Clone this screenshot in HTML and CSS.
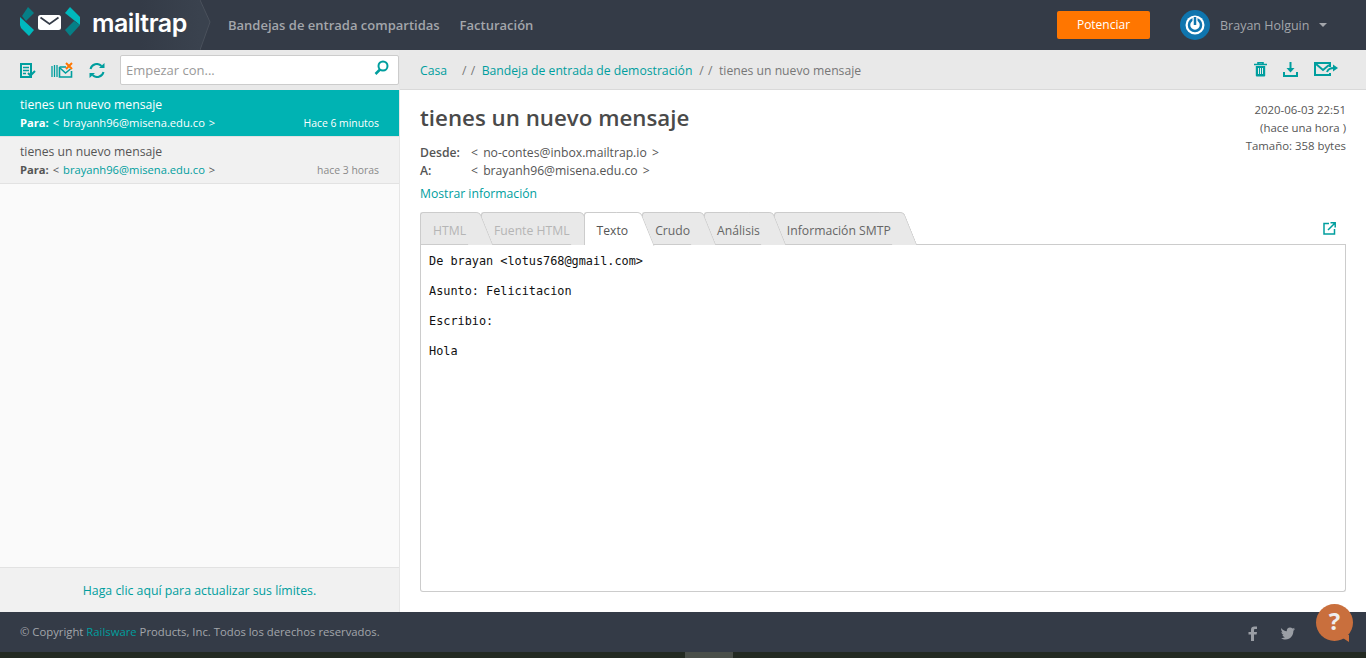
FILE: index.html
```html
<!DOCTYPE html>
<html lang="es">
<head>
    <meta charset="UTF-8">
    <title>Mailtrap</title>
    <link rel="stylesheet" href="styles.css">
</head>
<body>
<div class="page">
    <header class="topbar">
        <div class="brand">
            <svg class="brand-mark" width="60" height="30" viewBox="0 0 60 30">
                <path d="M8 0 14 6 6 14 2 9z" fill="#067f86"/>
                <path d="M0 10 14 23 9 29 1 21 0 18z" fill="#00b9bd"/>
                <rect x="18" y="8" width="23" height="15" rx="2.500" fill="#fff"/>
                <path d="M20.500 10.500 29.500 17 38.500 10.500" fill="none" stroke="#343b47" stroke-width="1.800"/>
                <path d="M45 6 50 0 59 9 60 10 60 18z" fill="#00b9bd"/>
                <path d="M45 23 54 14 60 18 50 29z" fill="#067f86"/>
            </svg>
            <span class="brand-name">mailtrap</span>
            <svg class="brand-chevron" width="12" height="50" viewBox="0 0 12 50">
                <path d="M0 0 10 22 0 50" fill="#3a424e" stroke="#4a515c"/>
            </svg>
        </div>
        <nav class="topnav">
            <a href="#">Bandejas de entrada compartidas</a>
            <a href="#">Facturación</a>
        </nav>
        <a class="btn-upgrade" href="#">Potenciar</a>
        <div class="user">
            <svg width="30" height="30" viewBox="0 0 30 30">
                <circle cx="15" cy="15" r="15" fill="#0f75ae"/>
                <circle cx="15" cy="15" r="9.500" fill="#fff"/>
                <circle cx="15" cy="15" r="6" fill="none" stroke="#0f75ae" stroke-width="2.500"/>
                <path d="M15 7v8" stroke="#fff" stroke-width="5"/>
                <path d="M15 7v8" stroke="#0f75ae" stroke-width="2.500"/>
            </svg>
            <span class="user-name">Brayan Holguin</span>
            <span class="caret"></span>
        </div>
    </header>

    <div class="main">
        <aside class="sidebar">
            <div class="side-tools">
                <svg class="icon" width="16" height="15" viewBox="0 0 16 15">
                    <path d="M1 1h10v13H1z" fill="none" stroke="#009e9e" stroke-width="2"/>
                    <path d="M3 4.500h6M3 7.500h6M3 10.500h3" stroke="#009e9e" stroke-width="1.500"/>
                    <path d="M8 10l2.500 2.500 4.500-4.500" fill="none" stroke="#009e9e" stroke-width="2"/>
                </svg>
                <svg class="icon" width="22" height="16" viewBox="0 0 22 16">
                    <path d="M1 4v11M3.500 3v12M6 3v12" stroke="#009e9e" stroke-width="1.300"/>
                    <path d="M8.500 5h6.500M20.500 9v6h-12V5" fill="none" stroke="#009e9e" stroke-width="1.600"/>
                    <path d="M9 6l5.500 5 5-4" fill="none" stroke="#009e9e" stroke-width="1.600"/>
                    <path d="M15 1l6 6M21 1l-6 6" stroke="#ff7600" stroke-width="2"/>
                </svg>
                <svg class="icon" width="16" height="15" viewBox="0 0 16 15">
                    <path d="M1.500 6a6.500 6.500 0 0 1 11-3" fill="none" stroke="#009e9e" stroke-width="2"/>
                    <path d="M10 5h5.500V0z" fill="#009e9e"/>
                    <path d="M14.500 9a6.500 6.500 0 0 1-11 3" fill="none" stroke="#009e9e" stroke-width="2"/>
                    <path d="M6 10H.5v5z" fill="#009e9e"/>
                </svg>
                <div class="search">
                    <input type="text" placeholder="Empezar con...">
                    <svg width="15" height="15" viewBox="0 0 15 15">
                        <circle cx="9" cy="6" r="4.500" fill="none" stroke="#009e9e" stroke-width="2"/>
                        <path d="M6 9.500 1.500 14" stroke="#009e9e" stroke-width="2.500"/>
                    </svg>
                </div>
            </div>
            <ul class="msg-list">
                <li class="msg msg-active">
                    <div class="msg-subject">tienes un nuevo mensaje</div>
                    <div class="msg-meta">
                        <span class="msg-to"><b>Para:</b> &lt; <a href="#">brayanh96@misena.edu.co</a> &gt;</span>
                        <span class="msg-time">Hace 6 minutos</span>
                    </div>
                </li>
                <li class="msg">
                    <div class="msg-subject">tienes un nuevo mensaje</div>
                    <div class="msg-meta">
                        <span class="msg-to"><b>Para:</b> &lt; <a href="#">brayanh96@misena.edu.co</a> &gt;</span>
                        <span class="msg-time">hace 3 horas</span>
                    </div>
                </li>
            </ul>
            <div class="side-foot"><a href="#">Haga clic aquí para actualizar sus límites.</a></div>
        </aside>

        <section class="content">
            <div class="crumbs">
                <a class="crumb-home" href="#">Casa</a>
                <span class="sep">/ /</span>
                <a href="#">Bandeja de entrada de demostración</a>
                <span class="sep">/ /</span>
                <span>tienes un nuevo mensaje</span>
                <div class="crumb-actions">
                    <svg width="13" height="15" viewBox="0 0 13 15">
                        <path d="M0 2.500h13M4 2V.800h5V2" fill="none" stroke="#009e9e" stroke-width="1.600"/>
                        <path d="M1.800 4h9.400v9.500a1 1 0 0 1-1 1H2.800a1 1 0 0 1-1-1z" fill="#009e9e"/>
                        <path d="M4.500 6v6M6.500 6v6M8.500 6v6" stroke="#e9e9e9" stroke-width="1"/>
                    </svg>
                    <svg width="15" height="15" viewBox="0 0 15 15">
                        <path d="M7.500 0v8" stroke="#009e9e" stroke-width="2"/>
                        <path d="M3.500 6h8l-4 4.500z" fill="#009e9e"/>
                        <path d="M1 10v4h13v-4" fill="none" stroke="#009e9e" stroke-width="2"/>
                    </svg>
                    <svg width="24" height="14" viewBox="0 0 24 14">
                        <path d="M16 5V1H1v12h15v-2" fill="none" stroke="#009e9e" stroke-width="2"/>
                        <path d="M2 2l7 6 6-5" fill="none" stroke="#009e9e" stroke-width="2"/>
                        <path d="M13 10c1-3 4-4 7-4" fill="none" stroke="#009e9e" stroke-width="2"/>
                        <path d="M19 2.500 24 6l-5 3.500z" fill="#009e9e"/>
                    </svg>
                </div>
            </div>

            <div class="message">
                <div class="msg-stats">
                    <div>2020-06-03 22:51</div>
                    <div>(hace una hora )</div>
                    <div>Tamaño: 358 bytes</div>
                </div>
                <h1>tienes un nuevo mensaje</h1>
                <div class="addr"><b>Desde:</b><span>&lt; no-contes@inbox.mailtrap.io &gt;</span></div>
                <div class="addr"><b>A:</b><span>&lt; brayanh96@misena.edu.co &gt;</span></div>
                <a class="more" href="#">Mostrar información</a>

                <div class="tabs">
                    <a class="tab tab-off" href="#">HTML</a>
                    <a class="tab tab-off" href="#">Fuente HTML</a>
                    <a class="tab tab-on" href="#">Texto</a>
                    <a class="tab" href="#">Crudo</a>
                    <a class="tab" href="#">Análisis</a>
                    <a class="tab" href="#">Información SMTP</a>
                    <svg class="tab-open" width="13" height="13" viewBox="0 0 13 13">
                        <path d="M6 1.500H1v10.500h10.500V7" fill="none" stroke="#009e9e" stroke-width="1.500"/>
                        <path d="M5 8l7-7M7.500 .800h4.700v4.700" fill="none" stroke="#009e9e" stroke-width="1.500"/>
                    </svg>
                </div>
                <pre class="body-text">De brayan &lt;lotus768@gmail.com&gt;

Asunto: Felicitacion

Escribio:

Hola</pre>
            </div>
        </section>
    </div>

    <footer class="footer">
        <span>© Copyright <a href="#">Railsware</a> Products, Inc. Todos los derechos reservados.</span>
        <div class="social">
            <svg width="10" height="15" viewBox="0 0 10 15">
                <path d="M3 15V8.500H.500V6H3V3.800C3 1.500 4.300.500 6.300.500H9V3H7.200C6.400 3 6 3.400 6 4.200V6h3l-.4 2.500H6V15z" fill="#9a9ea5"/>
            </svg>
            <svg width="15" height="13" viewBox="0 0 15 13">
                <path d="M0 1c1.500 2 3.500 3 5.800 3.200C5.500 2 7 .500 9 .500c1 0 1.900.400 2.500 1 .8-.1 1.600-.4 2.200-.8-.2.8-.8 1.400-1.400 1.800.7-.1 1.300-.3 1.700-.5-.4.700-1 1.200-1.600 1.700C12.500 8 9.500 12.500 4.500 12.500c-1.700 0-3.200-.5-4.500-1.300 1.500.2 3-.2 4.200-1.100C2.900 10 1.800 9.200 1.400 8c.5.100.9.100 1.300 0C1.400 7.700.400 6.500.400 5.100c.4.200.9.400 1.400.4C.6 4.600 0 2.500 0 1z" fill="#9a9ea5"/>
            </svg>
        </div>
        <div class="help">
            <span class="help-mark">?</span>
        </div>
    </footer>
    <div class="taskbar"><span class="taskbar-tab"></span></div>
</div>
</body>
</html>
```

FILE: styles.css
```css
* { box-sizing: border-box; }
html, body {
    margin: 0;
    height: 100%;
    overflow: hidden;
    background: #fff;
}
body {
    font-family: "Open Sans", "Liberation Sans", sans-serif;
    font-size: 12.2px;
    color: #555;
}
a {
    color: #009e9e;
    text-decoration: none;
}
svg {
    display: block;
    flex: none;
}
.page {
    width: 1366px;
    height: 658px;
    display: flex;
    flex-direction: column;
}

/* top bar */
.topbar {
    height: 50px;
    flex: none;
    background: #343b47;
    display: flex;
    align-items: center;
}
.brand {
    width: 200px;
    height: 50px;
    flex: none;
    padding-left: 20px;
    display: flex;
    align-items: center;
    background: linear-gradient(to right, #343b47 70%, #3a424e);
}
.brand-mark {
    margin-top: -6px;
}
.brand-name {
    margin-left: 12px;
    font-family: "Inter", "Open Sans", sans-serif;
    font-size: 25px;
    font-weight: 600;
    letter-spacing: -0.5px;
    color: #fff;
    width: 108px;
    flex: none;
    margin-top: -5px;
}
.brand-chevron {
    margin-right: -12px;
}
.topnav {
    margin-left: 28px;
    display: flex;
    gap: 20px;
}
.topnav a {
    color: #a3a6ab;
    font-size: 13px;
    font-weight: 600;
}
.btn-upgrade {
    margin-left: auto;
    width: 93px;
    height: 28px;
    line-height: 28px;
    border-radius: 2px;
    background: #ff7600;
    color: #fff;
    font-size: 12px;
    text-align: center;
}
.user {
    margin-left: 30px;
    width: 186px;
    display: flex;
    align-items: center;
}
.user-name {
    margin-left: 10px;
    color: #a3a6ab;
    font-size: 12.5px;
    margin-top: 1px;
}
.caret {
    margin-left: 10px;
    border: 4px solid transparent;
    border-top: 4px solid #a3a6ab;
    margin-top: 3px;
}

/* main columns */
.main {
    flex: 1;
    display: flex;
    min-height: 0;
}
.sidebar {
    width: 400px;
    flex: none;
    display: flex;
    flex-direction: column;
    background: #fafafa;
    border-right: 1px solid #e6e6e6;
}
.side-tools {
    height: 40px;
    flex: none;
    background: #e9e9e9;
    display: flex;
    align-items: center;
    padding-left: 20px;
}
.side-tools .icon:nth-child(2) { margin-left: 15px; }
.side-tools .icon:nth-child(3) { margin-left: 16px; }
.search {
    margin-left: 15px;
    width: 279px;
    height: 30px;
    background: #fff;
    border: 1px solid #ccc;
    border-radius: 2px;
    display: flex;
    align-items: center;
    padding: 0 9px 0 5px;
}
.search input {
    flex: 1;
    min-width: 0;
    border: 0;
    outline: 0;
    padding: 0;
    font: 13px "Open Sans", sans-serif;
    color: #555;
}
.search input::placeholder { color: #999; opacity: 1; }
.search svg { margin-top: -5px; }

.msg-list {
    list-style: none;
    margin: 0;
    padding: 0;
    flex: 1;
}
.msg {
    height: 47px;
    padding: 5px 20px 0;
    background: #f1f1f1;
    border-bottom: 1px solid #e2e2e2;
}
.msg-subject {
    font-size: 12.2px;
    line-height: 19px;
    color: #555;
}
.msg-meta {
    display: flex;
    justify-content: space-between;
    font-size: 11.2px;
    line-height: 18px;
    color: #555;
}
.msg-to { word-spacing: 1px; }
.msg-time { font-size: 10.4px; color: #8a8a8a; }
.msg-active {
    background: #00b3b3;
}
.msg-active .msg-subject,
.msg-active .msg-meta,
.msg-active .msg-meta a,
.msg-active .msg-time { color: #fff; }

.side-foot {
    height: 45px;
    flex: none;
    background: #f1f1f1;
    border-top: 1px solid #e2e2e2;
    text-align: center;
    line-height: 45px;
    font-size: 12.3px;
}

/* message */
.content {
    flex: 1;
    min-width: 0;
    display: flex;
    flex-direction: column;
}
.crumbs {
    height: 40px;
    flex: none;
    background: #e9e9e9;
    border-bottom: 1px solid #d9d9d9;
    display: flex;
    align-items: center;
    padding: 1px 28px 0 20px;
    color: #777;
}
.crumb-home { margin-right: 8px; }
.sep { margin-right: 6px; color: #777; letter-spacing: 0.5px; }
.crumbs a + .sep { margin-left: 7px; }
.crumb-actions {
    margin-left: auto;
    margin-top: -2px;
    display: flex;
    align-items: center;
    gap: 16px;
}
.message {
    position: relative;
    padding: 0 20px;
}
.msg-stats {
    position: absolute;
    top: 11px;
    right: 20px;
    text-align: right;
    font-size: 11.4px;
    line-height: 18px;
}
h1 {
    margin: 12px 0 10px;
    font-size: 22.3px;
    line-height: 32px;
    font-weight: 600;
    color: #4a4a4a;
}
.addr {
    display: flex;
    line-height: 18px;
    word-spacing: 2px;
}
.addr b {
    width: 51px;
    font-weight: 600;
}
.more {
    display: block;
    margin-top: 5px;
    line-height: 18px;
}
.tabs {
    position: relative;
    margin-top: 9px;
    height: 33px;
    display: flex;
    padding-right: 20px;
    border-bottom: 1px solid #ccc;
}
.tab {
    position: relative;
    height: 32px;
    padding: 0 4px 0 12px;
    line-height: 35px;
    color: #666;
    background: #e9e9e9;
    border: 1px solid #ccc;
    border-right: 0;
    border-bottom: 0;
    border-radius: 3px 0 0 0;
    margin-right: 10px;
    white-space: nowrap;
}
.tab:nth-child(1) { z-index: 6; padding-right: 5px; }
.tab:nth-child(2) { z-index: 5; }
.tab:nth-child(4) { z-index: 4; }
.tab:nth-child(5) { z-index: 3; }
.tab:nth-child(6) { z-index: 2; }
.tab::after {
    content: "";
    position: absolute;
    top: -1px;
    right: -9px;
    width: 24px;
    height: calc(100% + 1px);
    background: #e9e9e9;
    border-top: 1px solid #ccc;
    border-right: 1px solid #ccc;
    border-radius: 0 4px 0 0;
    transform: skewX(22deg);
    transform-origin: top left;
    z-index: -1;
}
.tab-off { color: #b5b5b5; }
.tab-on {
    background: #fff;
    height: 33px;
    z-index: 7;
    color: #555;
}
.tab-on::after { background: #fff; }
.tab-open {
    position: absolute;
    right: 10px;
    top: 10px;
}
.body-text {
    margin: 0;
    height: 347px;
    padding: 9px 8px;
    border: 1px solid #ccc;
    border-top: 0;
    border-radius: 0 0 3px 3px;
    font-family: "DejaVu Sans Mono", monospace;
    font-size: 11.85px;
    line-height: 15px;
    color: #111;
}

/* footer */
.footer {
    position: relative;
    height: 40px;
    flex: none;
    background: #343b47;
    color: #a3a6ab;
    display: flex;
    align-items: center;
    padding: 0 0 2px 20px;
    font-size: 11.3px;
}
.social {
    position: absolute;
    left: 1248px;
    top: 14px;
    display: flex;
    gap: 23px;
    align-items: center;
}
.help {
    position: absolute;
    left: 1316px;
    top: -8px;
    width: 37px;
    height: 37px;
    border-radius: 50%;
    background: #c96f3d;
    text-align: center;
    color: #eee;
    font-size: 24px;
    font-weight: 700;
    line-height: 33px;
}
.help::after {
    content: "";
    position: absolute;
    left: 22px;
    top: 31px;
    border-left: 11px solid transparent;
    border-top: 7px solid #c96f3d;
}
.taskbar {
    height: 6px;
    flex: none;
    background: #232a22;
    position: relative;
}
.taskbar-tab {
    position: absolute;
    left: 685px;
    top: 0;
    width: 48px;
    height: 6px;
    background: #4a4f4a;
}
```
